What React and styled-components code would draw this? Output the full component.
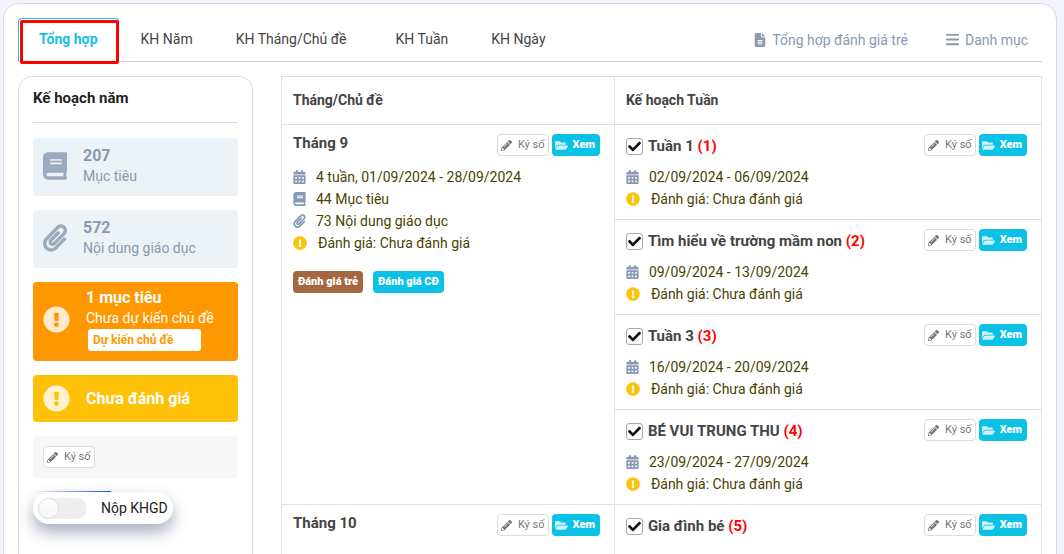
import { useState } from "react";
import styled, { createGlobalStyle } from "styled-components";
import {
  FaBook,
  FaCalendarAlt,
  FaCheck,
  FaExclamationCircle,
  FaFolderOpen,
  FaPaperclip,
  FaPencilAlt,
} from "react-icons/fa";
import { FaBars, FaFileLines } from "react-icons/fa6";

const GlobalStyle = createGlobalStyle`
  *,
  *::before,
  *::after {
    box-sizing: border-box;
  }

  html {
    height: 100%;
    overflow: hidden;
    background: #f3f4fb;
  }

  body {
    margin: 0;
    color: #444;
    font-family: Roboto, "Liberation Sans", sans-serif;
    font-size: 14px;
    line-height: 22px;
  }

  button,
  input {
    font-family: inherit;
  }
`;

const Panel = styled.main`
  margin: 3px 7px 0 3px;
  padding: 14px 14px 40px;
  background: #fff;
  border: 1px solid #d9dade;
  border-radius: 16px;
`;

const TopBar = styled.header`
  display: flex;
  justify-content: space-between;
  border-bottom: 1px solid #d2d2d2;
`;

const Tabs = styled.nav`
  display: flex;
  gap: 7px;
`;

const TabGroup = styled.div`
  display: flex;
  gap: 1px;
`;

const Tab = styled.a`
  position: relative;
  height: 43px;
  padding: 0 20px;
  border: 1px solid transparent;
  border-bottom: 0;
  border-radius: 4px 4px 0 0;
  color: ${({ $active }) => ($active ? "#18bfe3" : "#444")};
  border-color: ${({ $active }) => ($active ? "#18bfe3" : "transparent")};
  font-weight: ${({ $active }) => ($active ? 700 : 400)};
  line-height: 40px;
  text-decoration: none;
`;

const Highlight = styled.span`
  position: absolute;
  inset: 1px -1px -3px 1px;
  border: 3px solid #f00;
  border-radius: 2px;
`;

const Links = styled.div`
  display: flex;
  align-items: center;
  gap: 37px;
  padding-right: 14px;
`;

const TopLink = styled.a`
  display: flex;
  align-items: center;
  gap: 5px;
  color: #8899b0;
  text-decoration: none;
`;

const Content = styled.div`
  display: grid;
  grid-template-columns: 235px 1fr;
  gap: 28px;
  margin-top: 14px;
`;

const Sidebar = styled.aside`
  display: flex;
  flex-direction: column;
  gap: 14px;
  padding: 10px 14px;
  border: 1px solid #dcdcdc;
  border-radius: 14px;
`;

const SidebarTitle = styled.h2`
  margin: 0 0 1px;
  padding-bottom: 13px;
  border-bottom: 1px solid #dcdcdc;
  color: #222;
  font-size: 15px;
  font-weight: 700;
`;

const Card = styled.div`
  display: flex;
  align-items: center;
  gap: 16px;
  padding: ${({ $tone }) => ($tone ? "6px 10px 10px" : "8px 10px 10px")};
  background: ${({ $tone }) => $tone || "#ecf2f5"};
  border-radius: 4px;
  color: ${({ $tone }) => ($tone ? "#fff" : "#8899b0")};
  line-height: 20px;

  > svg {
    flex: none;
    width: ${({ $tone }) => ($tone ? 27 : 24)}px;
    height: ${({ $tone }) => ($tone ? 27 : 28)}px;
    opacity: 0.8;
  }
`;

const CardValue = styled.div`
  font-size: 16px;
  font-weight: 700;
`;

const Status = styled(Card)`
  height: 47px;
  padding: 0 10px;
`;

const PlanButton = styled.button`
  display: block;
  width: 113px;
  height: 22px;
  margin: 1px 2px 0;
  padding: 0 5px;
  background: #fff;
  border: 0;
  border-radius: 3px;
  color: #ff9800;
  font-size: 12px;
  font-weight: 700;
  text-align: left;
`;

const SignBox = styled.div`
  display: flex;
  padding: 10px;
  background: #f7f7f8;
  border-radius: 4px;
`;

const Submit = styled.label`
  display: flex;
  align-items: center;
  align-self: flex-start;
  gap: 14px;
  height: 32px;
  padding: 0 5px;
  background: #fff;
  border-radius: 16px;
  box-shadow: 0 8px 16px rgba(60, 75, 110, 0.45);
  color: #222;
`;

const SubmitArea = styled.div`
  display: flex;
  flex-direction: column;
  margin-top: -1px;

  &::before {
    content: "";
    width: 78px;
    height: 1px;
    background: linear-gradient(to right, #fff, #1450d8);
  }
`;

const Switch = styled.input`
  appearance: none;
  width: 49px;
  height: 21px;
  margin: 0;
  background: #efefef;
  border-radius: 11px;

  &::before {
    content: "";
    display: block;
    width: 21px;
    height: 21px;
    background: linear-gradient(#fff, #f6f6f6);
    border: 1px solid #ddd;
    border-radius: 50%;
  }

  &:checked::before {
    margin-left: auto;
  }
`;

const Table = styled.table`
  width: 100%;
  border-collapse: collapse;
  table-layout: fixed;
`;

const Th = styled.th`
  width: ${({ $width }) => $width};
  height: 48px;
  padding: 0 11px 2px;
  border: 1px solid #e0e0e0;
  font-weight: 700;
  text-align: left;
`;

const Td = styled.td`
  height: 95px;
  padding: 9px 14px 8px 11px;
  border: 1px solid #e0e0e0;
  vertical-align: top;
`;

const CellHead = styled.div`
  display: flex;
  justify-content: space-between;
  align-items: flex-start;
  height: 22px;
  margin-bottom: 10px;
`;

const Name = styled.h3`
  margin: 0;
  font-size: 15px;
  font-weight: 700;
  line-height: 18px;
`;

const WeekName = styled.label`
  display: flex;
  align-items: center;
  gap: 5px;
  height: 24px;
  font-size: 15px;
  font-weight: 700;
`;

const Order = styled.span`
  color: #f00;
`;

const CheckWrap = styled.span`
  display: grid;
  width: 17px;
  height: 17px;
  place-items: center;

  > * {
    grid-area: 1 / 1;
  }

  svg {
    color: #111;
    pointer-events: none;
  }

  input:not(:checked) + svg {
    visibility: hidden;
  }
`;

const Check = styled.input`
  appearance: none;
  width: 17px;
  height: 17px;
  margin: 0;
  border: 1px solid #aaa;
  border-radius: 3px;
`;

const Actions = styled.div`
  display: flex;
  gap: 3px;
`;

const SmallButton = styled.button`
  display: flex;
  align-items: center;
  height: 22px;
  padding: 0 4px;
  border: 1px solid transparent;
  border-radius: 4px;
  color: #fff;
  background: ${({ $color }) => $color || "#0bc2e6"};
  font-size: 11px;
  font-weight: 900;
  line-height: 20px;
  white-space: nowrap;
`;

const SignButton = styled(SmallButton)`
  gap: 6px;
  padding: 0 3px;
  background: #fff;
  border-color: #dcdcdc;
  color: #777;
  font-weight: 400;
`;

const ViewButton = styled(SmallButton)`
  gap: 5px;
  padding: 0 4px 0 2px;

  svg {
    opacity: 0.8;
  }
`;

const Info = styled.div`
  display: flex;
  align-items: center;
  gap: ${({ $warn }) => ($warn ? 11 : 10)}px;
  height: 22px;
  color: #4a4300;

  svg {
    flex: none;
    width: ${({ $warn }) => ($warn ? 14 : 13)}px;
    height: 14px;
    color: ${({ $warn }) => ($warn ? "#ffc107" : "#8899b4")};
  }
`;

const Reviews = styled.div`
  display: flex;
  gap: 10px;
  margin-top: 17px;
`;

const tabGroups = [
  ["Tổng hợp", "KH Năm", "KH Tháng/Chủ đề"],
  ["KH Tuần", "KH Ngày"],
];

const months = [
  {
    name: "Tháng 9",
    time: "4 tuần, 01/09/2024 - 28/09/2024",
    targets: 44,
    contents: 73,
    weeks: [
      { name: "Tuần 1", time: "02/09/2024 - 06/09/2024" },
      { name: "Tìm hiểu về trường mầm non", time: "09/09/2024 - 13/09/2024" },
      { name: "Tuần 3", time: "16/09/2024 - 20/09/2024" },
      { name: "BÉ VUI TRUNG THU", time: "23/09/2024 - 27/09/2024" },
    ],
  },
  {
    name: "Tháng 10",
    weeks: [{ name: "Gia đình bé" }],
  },
];

function Sign() {
  return (
    <SignButton type="button">
      <FaPencilAlt size={11} /> Ký số
    </SignButton>
  );
}

function CellActions() {
  return (
    <Actions>
      <Sign />
      <ViewButton type="button">
        <FaFolderOpen size={13} /> Xem
      </ViewButton>
    </Actions>
  );
}

function NotReviewed() {
  return (
    <Info $warn>
      <FaExclamationCircle /> Đánh giá: Chưa đánh giá
    </Info>
  );
}

function MonthCell({ month }) {
  return (
    <Td rowSpan={month.weeks.length}>
      <CellHead>
        <Name>{month.name}</Name>
        <CellActions />
      </CellHead>
      {month.time && (
        <>
          <Info>
            <FaCalendarAlt /> {month.time}
          </Info>
          <Info>
            <FaBook /> {month.targets} Mục tiêu
          </Info>
          <Info>
            <FaPaperclip /> {month.contents} Nội dung giáo dục
          </Info>
          <NotReviewed />
          <Reviews>
            <SmallButton type="button" $color="#a5673f">
              Đánh giá trẻ
            </SmallButton>
            <SmallButton type="button">Đánh giá CĐ</SmallButton>
          </Reviews>
        </>
      )}
    </Td>
  );
}

function WeekCell({ week, order }) {
  const [checked, setChecked] = useState(true);

  return (
    <Td>
      <CellHead>
        <WeekName>
          <CheckWrap>
            <Check
              type="checkbox"
              checked={checked}
              onChange={() => setChecked(!checked)}
            />
            <FaCheck size={13} />
          </CheckWrap>
          <span>
            {week.name} <Order>({order})</Order>
          </span>
        </WeekName>
        <CellActions />
      </CellHead>
      {week.time && (
        <>
          <Info>
            <FaCalendarAlt /> {week.time}
          </Info>
          <NotReviewed />
        </>
      )}
    </Td>
  );
}

export default function App() {
  const activeTab = "Tổng hợp";
  let order = 0;

  return (
    <>
      <GlobalStyle />
      <Panel>
        <TopBar>
          <Tabs>
            {tabGroups.map((group) => (
              <TabGroup key={group[0]}>
                {group.map((tab) => (
                  <Tab key={tab} href="#" $active={tab === activeTab}>
                    {tab}
                    {tab === activeTab && <Highlight />}
                  </Tab>
                ))}
              </TabGroup>
            ))}
          </Tabs>
          <Links>
            <TopLink href="#">
              <FaFileLines size={14} /> Tổng hợp đánh giá trẻ
            </TopLink>
            <TopLink href="#">
              <FaBars size={15} /> Danh mục
            </TopLink>
          </Links>
        </TopBar>
        <Content>
          <Sidebar>
            <SidebarTitle>Kế hoạch năm</SidebarTitle>
            <Card>
              <FaBook />
              <div>
                <CardValue>207</CardValue>
                Mục tiêu
              </div>
            </Card>
            <Card>
              <FaPaperclip />
              <div>
                <CardValue>572</CardValue>
                Nội dung giáo dục
              </div>
            </Card>
            <Card $tone="#ff9800">
              <FaExclamationCircle />
              <div>
                <CardValue>1 mục tiêu</CardValue>
                Chưa dự kiến chủ đề
                <PlanButton type="button">Dự kiến chủ đề</PlanButton>
              </div>
            </Card>
            <Status $tone="#ffc107">
              <FaExclamationCircle />
              <CardValue>Chưa đánh giá</CardValue>
            </Status>
            <SignBox>
              <Sign />
            </SignBox>
            <SubmitArea>
              <Submit>
                <Switch type="checkbox" role="switch" />
                Nộp KHGD
              </Submit>
            </SubmitArea>
          </Sidebar>
          <Table>
            <thead>
              <tr>
                <Th $width="43.8%">Tháng/Chủ đề</Th>
                <Th>Kế hoạch Tuần</Th>
              </tr>
            </thead>
            <tbody>
              {months.map((month) =>
                month.weeks.map((week, index) => {
                  order += 1;
                  return (
                    <tr key={week.name}>
                      {index === 0 && <MonthCell month={month} />}
                      <WeekCell week={week} order={order} />
                    </tr>
                  );
                })
              )}
            </tbody>
          </Table>
        </Content>
      </Panel>
    </>
  );
}
